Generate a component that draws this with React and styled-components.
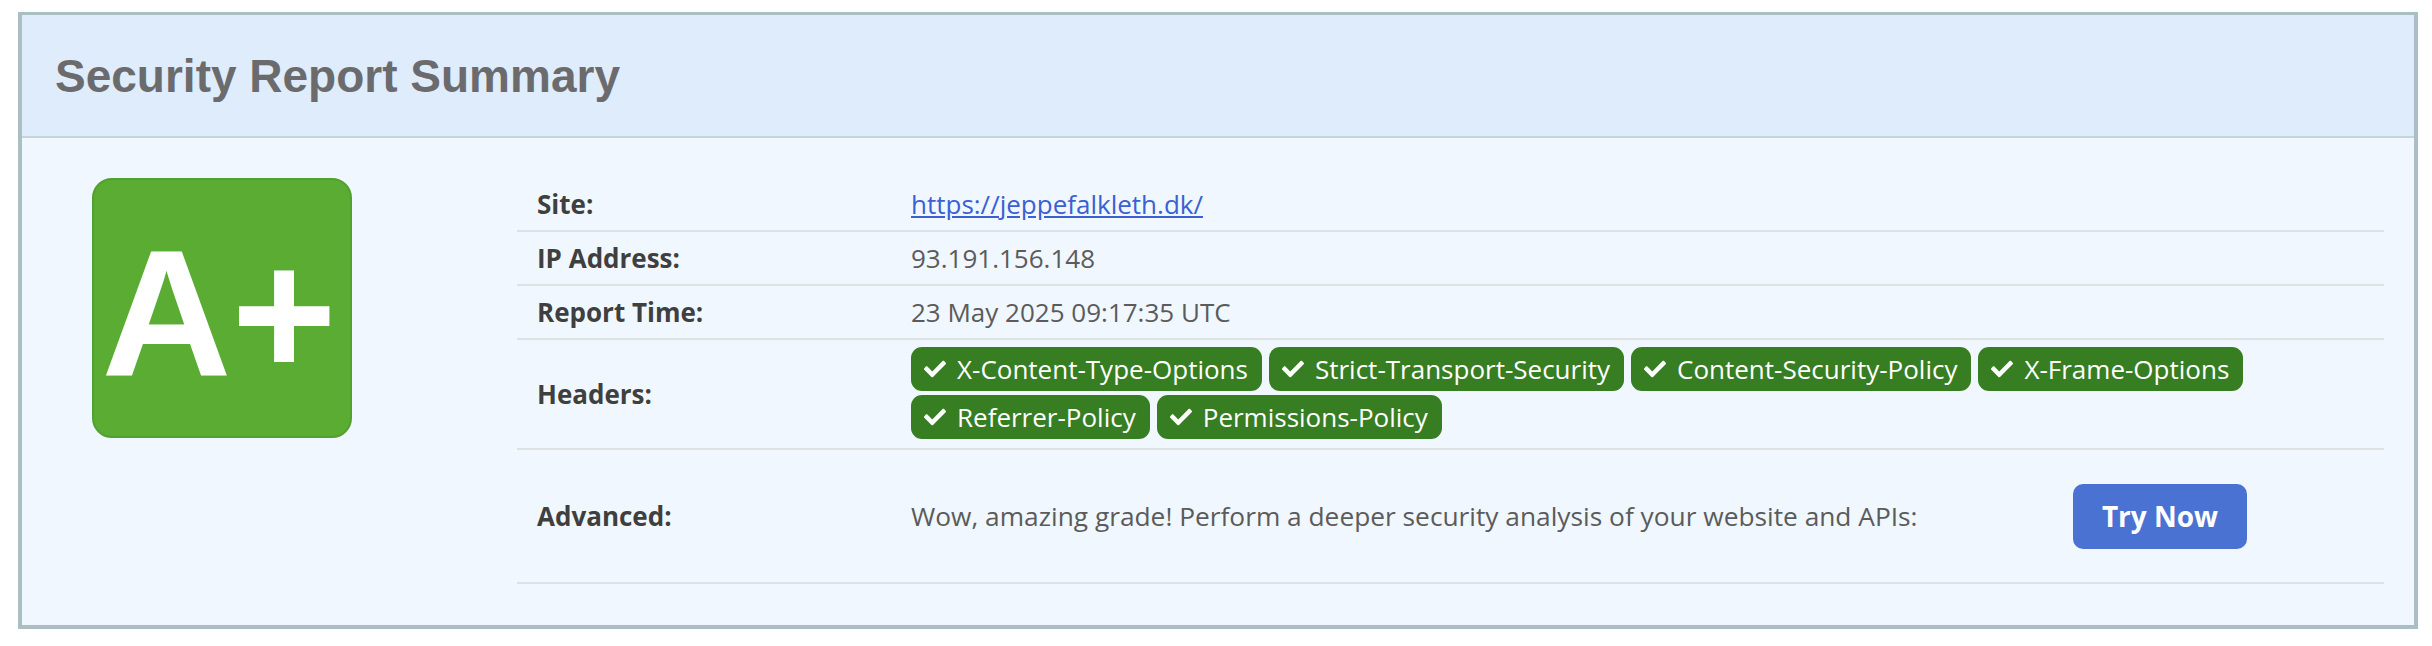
import React from 'react';
import styled, { createGlobalStyle } from 'styled-components';
import { FaCheck } from 'react-icons/fa';

const GlobalStyle = createGlobalStyle`
  * { box-sizing: border-box; }
  body {
    margin: 0;
    background: #fff;
    font-family: "Open Sans", "Noto Sans", sans-serif;
  }
`;

const report = {
  grade: 'A+',
  site: 'https://jeppefalkleth.dk/',
  ip: '93.191.156.148',
  time: '23 May 2025 09:17:35 UTC',
  headers: [
    'X-Content-Type-Options',
    'Strict-Transport-Security',
    'Content-Security-Policy',
    'X-Frame-Options',
    'Referrer-Policy',
    'Permissions-Policy',
  ],
};

const App = () => (
  <>
    <GlobalStyle />
    <Panel>
      <PanelHeader>
        <Title>Security Report Summary</Title>
      </PanelHeader>

      <PanelBody>
        <GradeBox>{report.grade}</GradeBox>

        <InfoTable>
          <Row>
            <Label>Site:</Label>
            <Value>
              <SiteLink href={report.site}>{report.site}</SiteLink>
            </Value>
          </Row>
          <Row>
            <Label>IP Address:</Label>
            <Value>{report.ip}</Value>
          </Row>
          <Row>
            <Label>Report Time:</Label>
            <Value>{report.time}</Value>
          </Row>
          <Row>
            <Label>Headers:</Label>
            <Value $padded>
              <BadgeList>
                {report.headers.map(h => (
                  <Badge key={h}>
                    <FaCheck size={22} />
                    {h}
                  </Badge>
                ))}
              </BadgeList>
            </Value>
          </Row>
          <Row $tall>
            <Label>Advanced:</Label>
            <Value>
              <AdvancedLine>
                <span>Wow, amazing grade! Perform a deeper security analysis of your website and APIs:</span>
                <div>
                  <TryButton>Try Now</TryButton>
                </div>
              </AdvancedLine>
            </Value>
          </Row>
        </InfoTable>
      </PanelBody>
    </Panel>
  </>
);

const Panel = styled.div`
  width: 2400px;
  margin: 12px 14px 18px 18px;
  border: 4px solid #aabfc3;
  border-top-width: 3px;
  background: #f0f7fe;
`;

const PanelHeader = styled.div`
  height: 123px;
  display: flex;
  align-items: center;
  padding-left: 33px;
  background: #dfecfc;
  border-bottom: 2px solid #c5d4d9;
`;

const Title = styled.h1`
  margin: 0;
  font-family: "Liberation Sans", Arial, sans-serif;
  font-size: 46px;
  font-weight: 700;
  color: #6b6b6e;
`;

const PanelBody = styled.div`
  display: flex;
  align-items: flex-start;
  gap: 165px;
  padding: 40px 30px 41px 70px;
`;

const GradeBox = styled.div`
  flex: 0 0 260px;
  height: 260px;
  display: flex;
  align-items: center;
  justify-content: center;
  padding-top: 12px;
  padding-right: 6px;
  background: #5aac32;
  border: 2px solid #52a02f;
  border-radius: 20px;
  color: #fff;
  font-family: "Liberation Sans", Arial, sans-serif;
  font-size: 180px;
  font-weight: 700;
  line-height: 1;
`;

const InfoTable = styled.div`
  flex: 1;
  display: flex;
  flex-direction: column;
`;

const Row = styled.div`
  display: grid;
  grid-template-columns: 394px 1fr;
  align-items: center;
  min-height: ${p => (p.$tall ? '134px' : '54px')};
  border-bottom: 2px solid #dfe2e5;
  font-size: 26px;
`;

const Label = styled.div`
  padding-left: 20px;
  font-weight: 700;
  color: #3f3f3f;
`;

const Value = styled.div`
  padding: ${p => (p.$padded ? '7px 0 9px' : '0')};
  color: #5b5b5b;
`;

const SiteLink = styled.a`
  color: #3a60d4;
  text-decoration: underline;
`;

const BadgeList = styled.div`
  display: flex;
  flex-wrap: wrap;
  column-gap: 7px;
  row-gap: 4px;
`;

const Badge = styled.span`
  display: inline-flex;
  align-items: center;
  gap: 11px;
  height: 44px;
  padding: 0 14px 0 13px;
  background: #377d22;
  border-radius: 11px;
  color: #fff;
  font-size: 26px;
  white-space: nowrap;
`;

const AdvancedLine = styled.div`
  display: grid;
  grid-template-columns: 1fr 311px;
  align-items: center;
  font-size: 26.3px;
`;

const TryButton = styled.button`
  width: 174px;
  height: 65px;
  border: none;
  border-radius: 10px;
  background: #4a72d2;
  color: #fff;
  font-family: "Open Sans", sans-serif;
  font-size: 28px;
  font-weight: 700;
  cursor: pointer;
`;

export default App;
